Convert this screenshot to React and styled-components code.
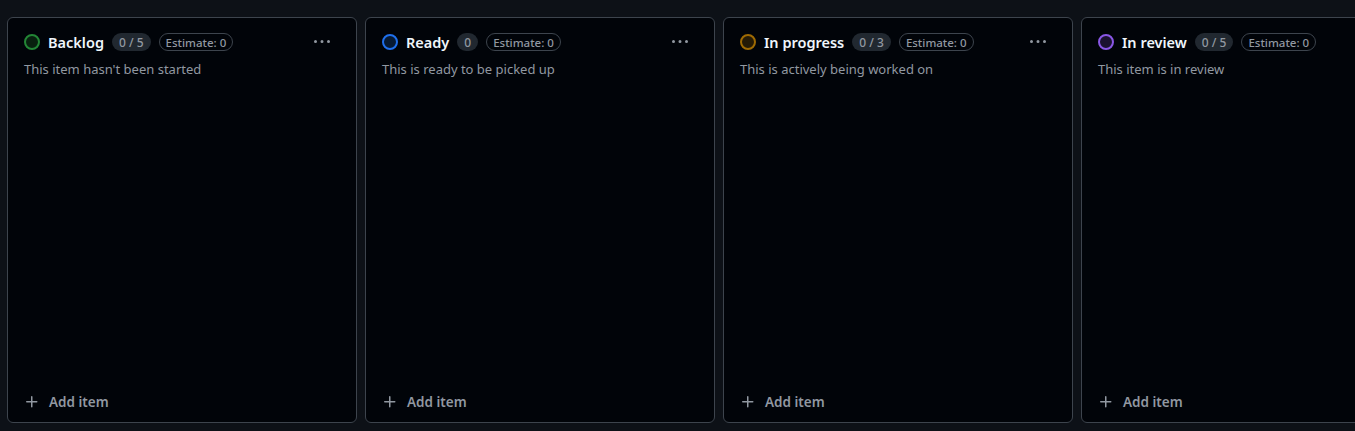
import React from 'react';
import styled, { createGlobalStyle } from 'styled-components';

const GlobalStyle = createGlobalStyle`
    html, body {
        margin: 0;
        padding: 0;
        background: #0d1117;
        font-family: "Segoe UI", "Noto Sans", "Liberation Sans", sans-serif;
        color: #f0f6fc;
    }
`;

const Board = styled.div`
    display: flex;
    gap: 8px;
    padding: 17px 0 0 7px;
    height: 431px;
    box-sizing: border-box;
    overflow: hidden;
`;

const Column = styled.section`
    flex: 0 0 350px;
    height: 406px;
    box-sizing: border-box;
    display: flex;
    flex-direction: column;
    background: #010409;
    border: 1px solid #3d444d;
    border-radius: 6px;
`;

const Header = styled.div`
    padding: 15px 16px 0 16px;
`;

const TitleRow = styled.div`
    display: flex;
    align-items: center;
    height: 18px;
`;

const StatusDot = styled.span`
    width: 16px;
    height: 16px;
    box-sizing: border-box;
    border-radius: 50%;
    border: 2px solid ${props => props.color};
    background: ${props => props.fill};
    flex-shrink: 0;
    margin-right: 8px;
`;

const Title = styled.h3`
    margin: 0 8px 0 0;
    font-size: 14.5px;
    font-weight: 600;
    color: #f0f6fc;
    line-height: 20px;
`;

const Counter = styled.span`
    display: inline-flex;
    align-items: center;
    height: 18px;
    padding: 0 7px;
    border-radius: 9px;
    background: #212830;
    color: #9198a1;
    font-size: 12px;
    font-weight: 500;
    margin-right: 8px;
`;

const Estimate = styled.span`
    display: inline-flex;
    align-items: center;
    height: 18px;
    box-sizing: border-box;
    padding: 0 6px;
    border-radius: 9px;
    border: 1px solid #3d444d;
    color: #9198a1;
    font-size: 11.5px;
    font-weight: 500;
`;

const MenuButton = styled.button`
    margin-left: auto;
    margin-right: 4px;
    width: 28px;
    height: 28px;
    display: flex;
    align-items: center;
    justify-content: center;
    background: transparent;
    border: 0;
    padding: 0;
    color: #9198a1;
    cursor: pointer;
`;

const Description = styled.p`
    margin: 8px 0 0 0;
    font-size: 13px;
    line-height: 20px;
    color: #9198a1;
`;

const Body = styled.div`
    flex: 1;
`;

const AddButton = styled.button`
    display: flex;
    align-items: center;
    gap: 9px;
    margin: 0 0 4px 8px;
    height: 32px;
    padding: 0 8px;
    background: transparent;
    border: 0;
    color: #9198a1;
    font-family: inherit;
    font-size: 13.5px;
    font-weight: 600;
    cursor: pointer;
`;

const KebabIcon = () => (
    <svg width="16" height="16" viewBox="0 0 16 16" fill="currentColor">
        <path d="M8 9a1.5 1.5 0 1 0 0-3 1.5 1.5 0 0 0 0 3ZM1.5 9a1.5 1.5 0 1 0 0-3 1.5 1.5 0 0 0 0 3Zm13 0a1.5 1.5 0 1 0 0-3 1.5 1.5 0 0 0 0 3Z" />
    </svg>
);

const PlusIcon = () => (
    <svg width="16" height="16" viewBox="0 0 16 16" fill="currentColor">
        <path d="M7.75 2a.75.75 0 0 1 .75.75V7h4.25a.75.75 0 0 1 0 1.5H8.5v4.25a.75.75 0 0 1-1.5 0V8.5H2.75a.75.75 0 0 1 0-1.5H7V2.75A.75.75 0 0 1 7.75 2Z" />
    </svg>
);

const columns = [
    { id: 1, name: 'Backlog', count: '0 / 5', color: '#238636', fill: '#08200f', description: "This item hasn't been started" },
    { id: 2, name: 'Ready', count: '0', color: '#1f6feb', fill: '#071a33', description: 'This is ready to be picked up' },
    { id: 3, name: 'In progress', count: '0 / 3', color: '#9e6a03', fill: '#241a06', description: 'This is actively being worked on' },
    { id: 4, name: 'In review', count: '0 / 5', color: '#8957e5', fill: '#1b1230', description: 'This item is in review' },
];

export default function App() {
    return (
        <>
            <GlobalStyle />
            <Board>
                {columns.map(col => (
                    <Column key={col.id}>
                        <Header>
                            <TitleRow>
                                <StatusDot color={col.color} fill={col.fill} />
                                <Title>{col.name}</Title>
                                <Counter>{col.count}</Counter>
                                <Estimate>Estimate: 0</Estimate>
                                <MenuButton aria-label="Column menu"><KebabIcon /></MenuButton>
                            </TitleRow>
                            <Description>{col.description}</Description>
                        </Header>
                        <Body />
                        <AddButton><PlusIcon />Add item</AddButton>
                    </Column>
                ))}
            </Board>
        </>
    );
}
